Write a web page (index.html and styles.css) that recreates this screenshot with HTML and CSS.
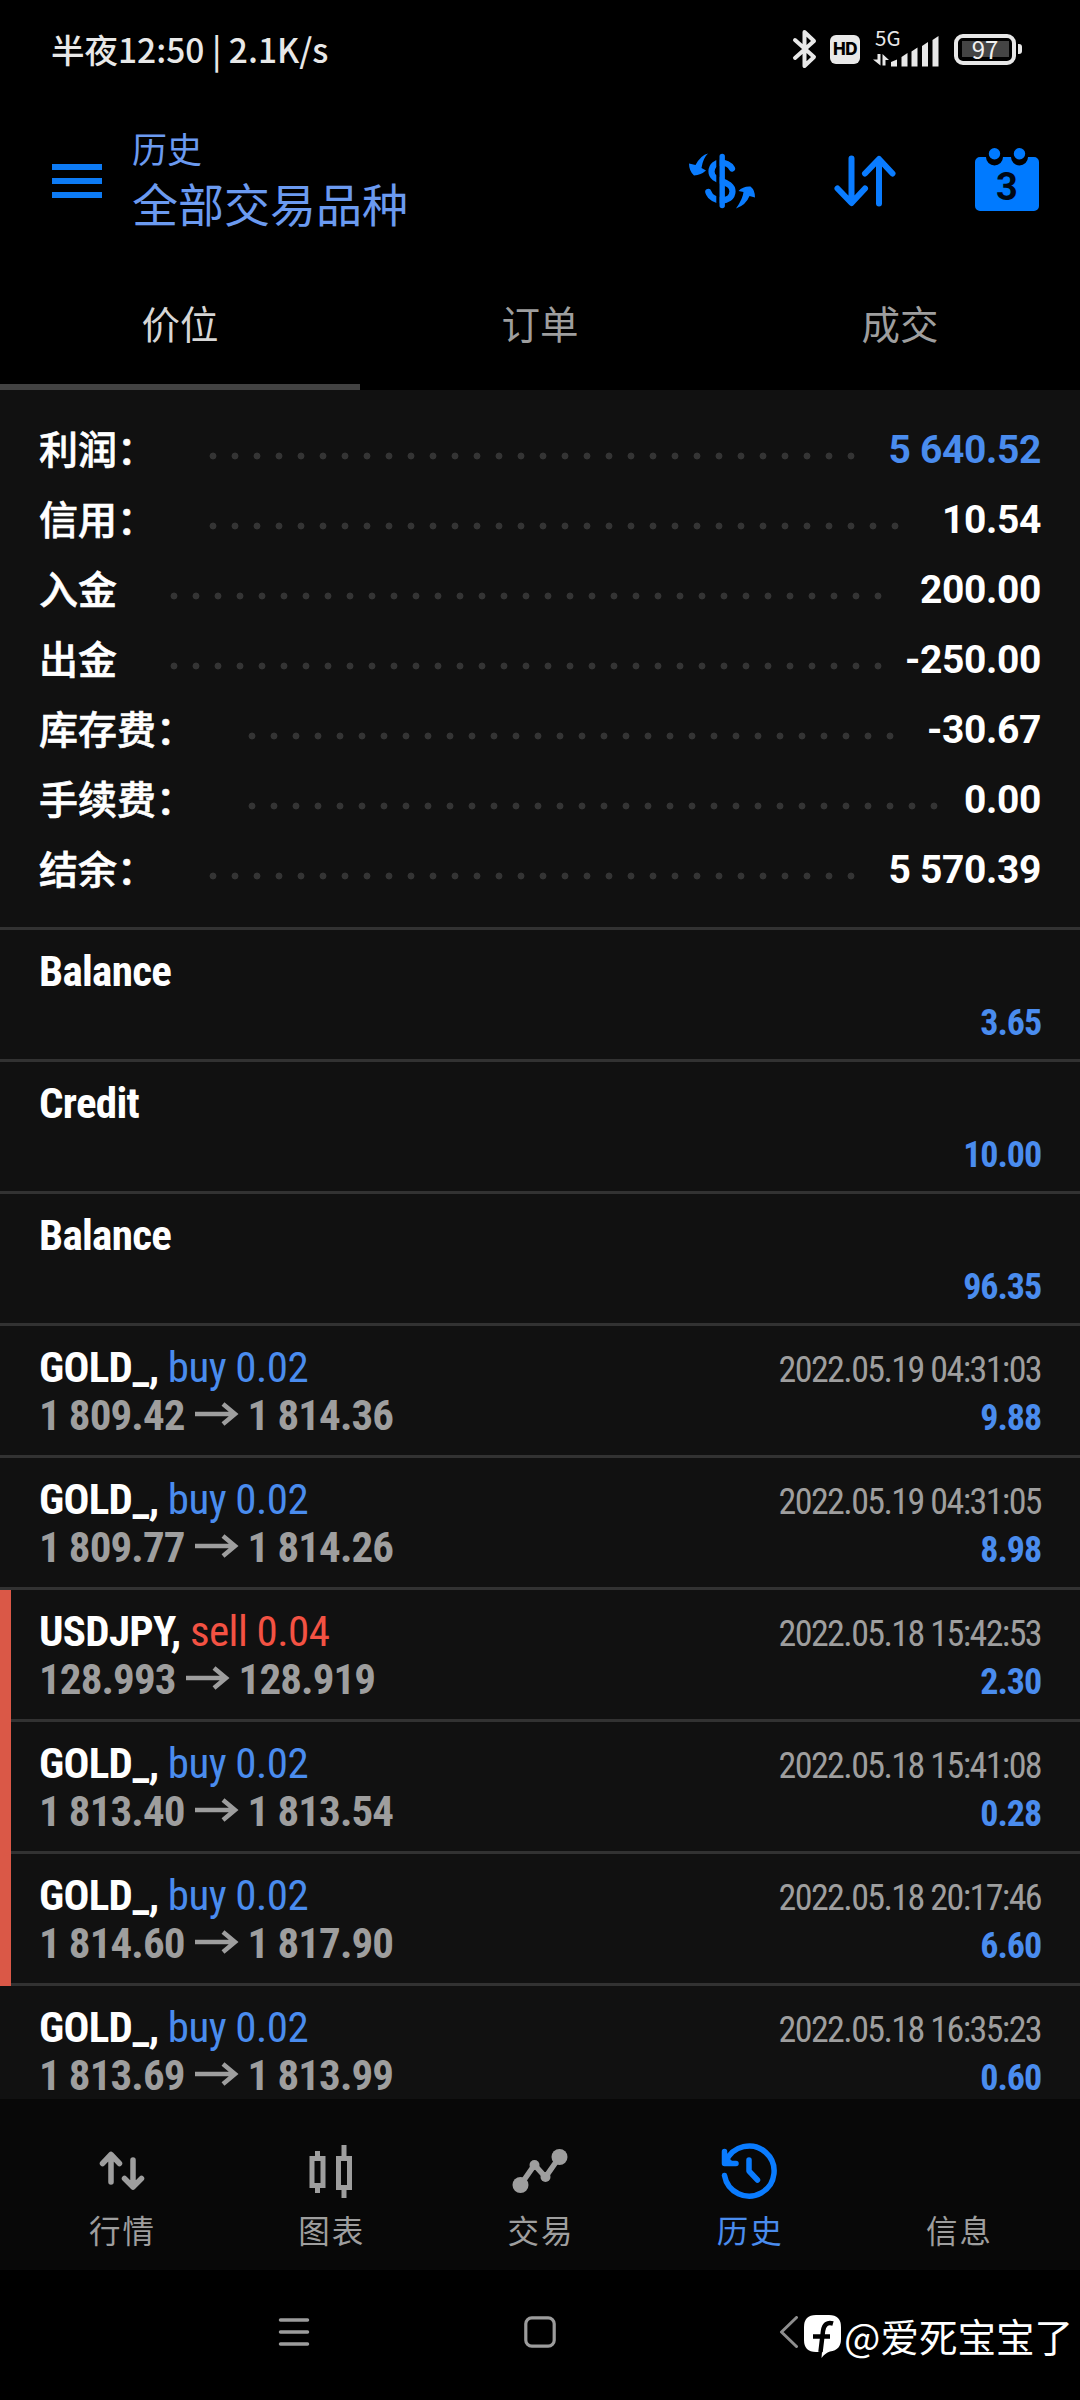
FILE: index.html
```html
<!DOCTYPE html>
<html lang="zh-CN">
<head>
<meta charset="utf-8">
<title>历史</title>
<link rel="stylesheet" href="styles.css">
</head>
<body>
<div class="app">
  <div class="statusbar">
    <span class="clock">半夜12:50 | 2.1K/s</span>
    <div class="indicators">
      <svg class="bt" width="26" height="40" viewBox="0 0 26 40"><path d="M3 11 L22 28 L12.5 37 V3 L22 12 L3 29" fill="none" stroke="#e8e8e8" stroke-width="4" stroke-linecap="round" stroke-linejoin="round"/></svg>
      <span class="hd">HD</span>
      <div class="signal">
        <span class="net">5G</span>
        <svg width="67" height="36" viewBox="0 0 67 36" fill="#e8e8e8"><path d="M5.500 23h3v11.500L1 28.500h4.500zM10.500 34.500V23l6.500 6h-3.500v5.500zM19 31l6-2.500v7h-6zM29.500 26l6-4v13.500h-6zM39.500 20.500l6-4v19h-6zM50 15l6-4v24.500h-6zM60.500 9l6-4v30.500h-6z"/></svg>
      </div>
      <div class="battery"><span>97</span></div>
    </div>
  </div>

  <header class="header">
    <svg class="menu" width="50" height="34" viewBox="0 0 50 34" fill="#0d7bf5"><path d="M0 0h50v6H0zM0 14h50v6H0zM0 28h50v6H0z"/></svg>
    <div class="titles">
      <div class="subtitle">历史</div>
      <h1 class="title">全部交易品种</h1>
    </div>
    <div class="actions">
      <svg width="68" height="64" viewBox="0 0 68 64">
        <path d="M44 19.500C40 12 24 10.500 23.500 22.500C23.500 34 44.500 30.500 44.500 42.500C44 54.500 24 54 20.300 43" fill="none" stroke="#0a7cff" stroke-width="6.200" stroke-linecap="round"/>
        <path d="M28.300 6h3.400v52h-3.400z" fill="#000"/>
        <path d="M34.200 7.500V56.500" stroke="#0a7cff" stroke-width="5.400" stroke-linecap="round"/>
        <path fill="#0a7cff" d="M20 4.500Q13 6 7.500 16L1 14.500Q1 22 6 26.500Q13 26 18 21.500L13.500 19Q15 9 20 4.500zM48 59.500Q55 49.500 55.500 43L50.500 42Q55 37 62.500 37.500Q67 41 67 48.500L61.500 47Q58 56 48 59.500z"/>
      </svg>
      <svg width="62" height="52" viewBox="0 0 62 52" fill="none" stroke="#0a7cff" stroke-width="6" stroke-linecap="round" stroke-linejoin="round"><path d="M17.500 3.500V47M3.500 33.500L17.500 48L31 33.500M45 48.500V5M31 18.500L45 4L58.500 18.500"/></svg>
      <div class="calendar">
        <svg width="64" height="64" viewBox="0 0 64 64" fill="#007aff"><path d="M5 9h6a8.500 8.500 0 0 0 17 0h8a8.500 8.500 0 0 0 17 0h6a5 5 0 0 1 5 5v44a5 5 0 0 1-5 5H5a5 5 0 0 1-5-5V14a5 5 0 0 1 5-5z"/><circle cx="19.500" cy="5.700" r="5.700"/><circle cx="44.500" cy="5.700" r="5.700"/></svg>
        <span>3</span>
      </div>
    </div>
  </header>

  <nav class="tabs">
    <div class="tab active">价位</div>
    <div class="tab">订单</div>
    <div class="tab">成交</div>
  </nav>

  <main class="content">
    <section class="summary">
      <div class="sum"><span>利润：</span><i style="width:660px"></i><b class="blue">5 640.52</b></div>
      <div class="sum"><span>信用：</span><i style="width:704px"></i><b>10.54</b></div>
      <div class="sum"><span>入金</span><i style="width:726px"></i><b>200.00</b></div>
      <div class="sum"><span>出金</span><i style="width:726px"></i><b>-250.00</b></div>
      <div class="sum"><span>库存费：</span><i style="width:660px"></i><b>-30.67</b></div>
      <div class="sum"><span>手续费：</span><i style="width:704px"></i><b>0.00</b></div>
      <div class="sum"><span>结余：</span><i style="width:660px"></i><b>5 570.39</b></div>
    </section>
    <section class="deals">
      <div class="deal"><div class="line"><span class="name">Balance</span></div><div class="line solo"><span class="amount">3.65</span></div></div>
      <div class="deal"><div class="line"><span class="name">Credit</span></div><div class="line solo"><span class="amount">10.00</span></div></div>
      <div class="deal"><div class="line"><span class="name">Balance</span></div><div class="line solo"><span class="amount">96.35</span></div></div>
      <div class="deal"><div class="line"><span class="name">GOLD_, <em class="buy">buy 0.02</em></span><span class="time">2022.05.19 04:31:03</span></div><div class="line"><span class="prices">1 809.42<svg class="arrow" viewBox="0 0 44 24"><path d="M0 12H39M28 2L40 12L28 22"/></svg>1 814.36</span><span class="amount">9.88</span></div></div>
      <div class="deal"><div class="line"><span class="name">GOLD_, <em class="buy">buy 0.02</em></span><span class="time">2022.05.19 04:31:05</span></div><div class="line"><span class="prices">1 809.77<svg class="arrow" viewBox="0 0 44 24"><path d="M0 12H39M28 2L40 12L28 22"/></svg>1 814.26</span><span class="amount">8.98</span></div></div>
      <div class="deal marked"><div class="line"><span class="name">USDJPY, <em class="sell">sell 0.04</em></span><span class="time">2022.05.18 15:42:53</span></div><div class="line"><span class="prices">128.993<svg class="arrow" viewBox="0 0 44 24"><path d="M0 12H39M28 2L40 12L28 22"/></svg>128.919</span><span class="amount">2.30</span></div></div>
      <div class="deal marked"><div class="line"><span class="name">GOLD_, <em class="buy">buy 0.02</em></span><span class="time">2022.05.18 15:41:08</span></div><div class="line"><span class="prices">1 813.40<svg class="arrow" viewBox="0 0 44 24"><path d="M0 12H39M28 2L40 12L28 22"/></svg>1 813.54</span><span class="amount">0.28</span></div></div>
      <div class="deal marked"><div class="line"><span class="name">GOLD_, <em class="buy">buy 0.02</em></span><span class="time">2022.05.18 20:17:46</span></div><div class="line"><span class="prices">1 814.60<svg class="arrow" viewBox="0 0 44 24"><path d="M0 12H39M28 2L40 12L28 22"/></svg>1 817.90</span><span class="amount">6.60</span></div></div>
      <div class="deal"><div class="line"><span class="name">GOLD_, <em class="buy">buy 0.02</em></span><span class="time">2022.05.18 16:35:23</span></div><div class="line"><span class="prices">1 813.69<svg class="arrow" viewBox="0 0 44 24"><path d="M0 12H39M28 2L40 12L28 22"/></svg>1 813.99</span><span class="amount">0.60</span></div></div>
    </section>
  </main>

  <nav class="bottom">
    <div class="item"><svg width="60" height="60" viewBox="0 0 60 60" fill="none" stroke="#9e9e9e" stroke-width="5.500" stroke-linecap="round" stroke-linejoin="round"><path d="M19 42V15M10.500 23.500L19 14.500L27.500 23.500M41 20V47M32.500 38.500L41 47L49.500 38.500"/></svg><span>行情</span></div>
    <div class="item"><svg width="60" height="60" viewBox="0 0 60 60" fill="none" stroke="#9e9e9e" stroke-width="5"><path d="M11 18.500h11v27H11zM37.500 18.500h11v29h-11zM16.500 11v7M16.500 45v8M43 5v13M43 47v11"/></svg><span>图表</span></div>
    <div class="item"><svg width="60" height="60" viewBox="0 0 60 60" fill="#9e9e9e"><path d="M10.500 45L24.500 25L35.500 37L49.500 17" fill="none" stroke="#9e9e9e" stroke-width="5.500"/><circle cx="10.500" cy="45" r="8"/><circle cx="49.500" cy="17" r="8"/><circle cx="24.500" cy="25" r="5"/><circle cx="35.500" cy="37" r="5"/></svg><span>交易</span></div>
    <div class="item active"><svg width="60" height="60" viewBox="0 0 60 60" fill="none" stroke="#0a7cff" stroke-width="5.500" stroke-linecap="round" stroke-linejoin="round"><path d="M5.500 35.500A25 25 0 1 0 7 21.500M5.500 11.500V23.500H17M30 20V31L38.500 40"/><path d="M5 13L16 24H5z" fill="#0a7cff" stroke="none"/></svg><span>历史</span></div>
    <div class="item"><div class="noicon"></div><span>信息</span></div>
  </nav>

  <div class="system">
    <svg width="32" height="32" viewBox="0 0 32 32" stroke="#9c9c9c" stroke-width="3.500" stroke-linecap="round"><path d="M2.500 4h27M2.500 16h27M2.500 28h27"/></svg>
    <svg width="32" height="32" viewBox="0 0 32 32" fill="none" stroke="#9c9c9c" stroke-width="3.200"><rect x="1.800" y="1.800" width="28.400" height="28.400" rx="6"/></svg>
    <svg width="32" height="32" viewBox="0 0 32 32" fill="none" stroke="#8e8e8e" stroke-width="3" stroke-linecap="round" stroke-linejoin="round"><path d="M26.500 1.500L11.500 16L26.500 30.500"/></svg>
  </div>

  <div class="watermark">
    <svg width="37" height="43" viewBox="0 0 37 43"><path fill="#fff" d="M12 0H25Q37 0 37 12V24Q37 35 26 36.500Q21 38 17.500 43L18 37H12Q0 37 0 25V12Q0 0 12 0z"/><path fill="none" stroke="#000" stroke-width="4.500" d="M29 8.500Q20.500 6 19 16L16.500 37M9 21.500H26"/></svg>
    <span>@爱死宝宝了</span>
  </div>
</div>
</body>
</html>
```
FILE: styles.css
```css
* { box-sizing: border-box; }
body { margin: 0; background: #000; }
svg { display: block; flex: none; }

.app {
  position: relative;
  display: flex;
  flex-direction: column;
  width: 1080px;
  height: 2400px;
  overflow: hidden;
  background: #000;
  color: #fff;
  font-family: Roboto, "Noto Sans CJK SC", sans-serif;
}

.statusbar {
  display: flex;
  justify-content: space-between;
  align-items: center;
  height: 98px;
  padding: 0 58px 0 51px;
}
.clock {
  font: 500 33.500px/40px "Noto Sans CJK SC", sans-serif;
  color: #e8e8e8;
  white-space: pre;
}
.indicators { display: flex; align-items: center; }
.hd {
  width: 30px;
  height: 29px;
  margin: 0 12px 0 12px;
  border-radius: 6px;
  background: #e8e8e8;
  color: #000;
  font: 800 17px/29px Inter, sans-serif;
  letter-spacing: -.5px;
  text-align: center;
}
.signal { position: relative; margin-right: 15px; }
.net {
  position: absolute;
  left: 3px;
  top: -4px;
  color: #e8e8e8;
  font: 400 20.500px/20px "Noto Sans CJK SC", sans-serif;
}
.battery {
  position: relative;
  width: 62px;
  height: 31px;
  margin-right: 6px;
  border: 4px solid #e8e8e8;
  border-radius: 9px;
  background: linear-gradient(#444, #444) center / 47px 16px no-repeat;
  color: #f0f0f0;
  font: 400 24px/21px "Noto Sans CJK SC", sans-serif;
  text-align: center;
}
.battery::after {
  content: "";
  position: absolute;
  right: -10px;
  top: 6px;
  width: 4px;
  height: 10px;
  border-radius: 0 3px 3px 0;
  background: #e8e8e8;
}

.header {
  display: flex;
  align-items: center;
  height: 166px;
  padding: 0 41px 0 52px;
}
.titles { margin: -2px 0 0 30px; color: #6b9af0; }
.subtitle { font: 400 35px/44px "Noto Sans CJK SC", sans-serif; }
.title { margin: 0; font: 400 46px/64px "Noto Sans CJK SC", sans-serif; }
.actions {
  display: flex;
  align-items: center;
  gap: 78px;
  margin-left: auto;
}
.calendar { position: relative; margin: -2px 0 0 1px; }
.calendar span {
  position: absolute;
  left: 0;
  top: 19px;
  width: 64px;
  color: #000814;
  font: 700 38px/40px Roboto, sans-serif;
  text-align: center;
}

.tabs { display: flex; height: 126px; }
.tab {
  flex: 1;
  border-bottom: 6px solid transparent;
  color: #9e9e9e;
  font: 400 38.500px/117px "Noto Sans CJK SC", sans-serif;
  text-align: center;
}
.tab.active { border-color: #424242; color: #d6d6d6; }

.content { height: 1709px; overflow: hidden; background: #111; }
.summary { height: 537px; padding: 24px 39px 0 39px; }
.sum {
  display: flex;
  align-items: center;
  height: 70px;
  font-size: 39px;
  line-height: 70px;
}
.sum span {
  height: 75px;
  font-family: "Noto Sans CJK SC", sans-serif;
  font-weight: 500;
  -webkit-text-stroke: .6px #fff;
}
.sum i {
  height: 8px;
  margin: 14px 0 0 46px;
  background: radial-gradient(circle 4px at 11px 4px, #343434 3px, transparent 3.800px) 0 0 / 22px 8px repeat-x;
}
.sum b { margin: 1px 0 0 auto; font-weight: 700; letter-spacing: -.35px; }
.blue { color: #4a8cee; }

.deal {
  position: relative;
  height: 132px;
  padding: 17px 39px 0 39px;
  border-top: 3px solid #323232;
}
.deal.marked::after {
  content: "";
  position: absolute;
  z-index: 1;
  left: 0;
  top: 0;
  bottom: -3px;
  width: 11px;
  background: #da5847;
}
.line {
  display: flex;
  justify-content: space-between;
  align-items: baseline;
  height: 48px;
  font: 700 43px/48px "Roboto Condensed", Roboto, sans-serif;
  font-stretch: 75%;
  letter-spacing: -.7px;
  white-space: pre;
}
.line.solo { justify-content: flex-end; padding-top: 4px; }
.line em { font-style: normal; font-weight: 400; letter-spacing: -.55px; }
.buy, .amount { color: #4a8cee; }
.sell { color: #f35243; }
.time {
  color: #9e9e9e;
  font-size: 36px;
  font-weight: 400;
  letter-spacing: -1.600px;
}
.amount { font-size: 36px; letter-spacing: -1.100px; }
.prices { color: #9e9e9e; letter-spacing: -.9px; }
.arrow {
  display: inline-block;
  width: 44px;
  height: 24px;
  margin: 0 9px 0 10px;
  vertical-align: 4px;
  fill: none;
  stroke: #9e9e9e;
  stroke-width: 4.500px;
}

.bottom {
  display: flex;
  height: 171px;
  padding: 41px 17px 0;
  background: #080808;
}
.item {
  display: flex;
  flex: 1;
  flex-direction: column;
  align-items: center;
  color: #9e9e9e;
  font: 400 31.500px/40px "Noto Sans CJK SC", sans-serif;
  letter-spacing: 2px;
}
.item span { margin-top: 9px; padding-left: 2px; }
.item.active { color: #4a8cee; }
.noicon { height: 60px; }

.system {
  display: flex;
  justify-content: space-between;
  height: 130px;
  padding: 46px 278px 0 278px;
}

.watermark {
  position: absolute;
  left: 804px;
  top: 2311px;
  display: flex;
  align-items: center;
  gap: 3px;
  font: 400 38.500px/54px "Noto Sans CJK SC", sans-serif;
  white-space: nowrap;
}
.watermark span { margin-top: -3px; }
```
